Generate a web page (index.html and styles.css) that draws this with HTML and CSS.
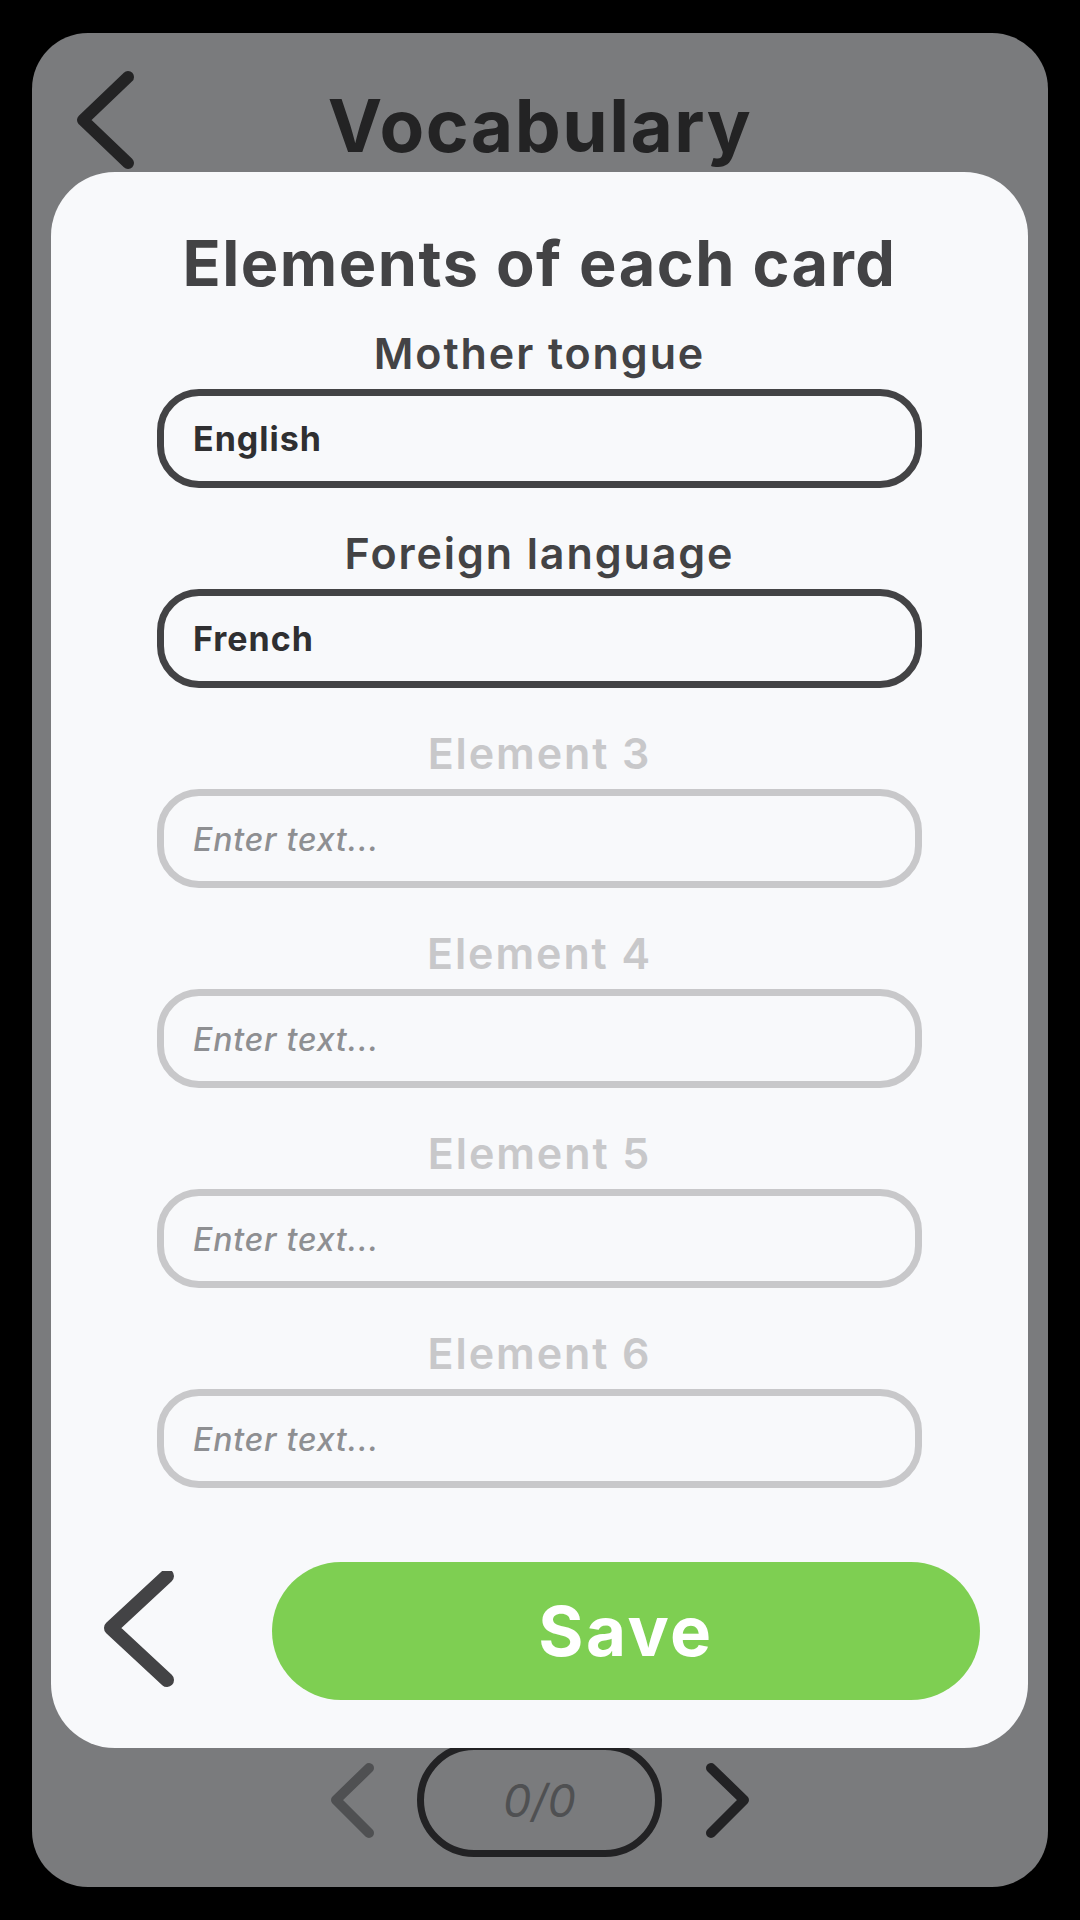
FILE: index.html
```html
<!DOCTYPE html>
<html lang="en">
<head>
<meta charset="utf-8">
<title>Vocabulary</title>
<link rel="stylesheet" href="styles.css">
</head>
<body>
<div class="phone">
  <header class="topbar">
    <svg class="top-back" width="70" height="110" viewBox="0 0 70 110"><path d="M62 6 L17 49 L62 92" /></svg>
    <h1 class="screen-title">Vocabulary</h1>
    <span class="topbar-spacer"></span>
  </header>
  <div class="screen-body"></div>
  <nav class="pager">
    <svg class="pager-arrow prev" width="50" height="80" viewBox="0 0 50 80"><path d="M43 8 L10 40 L43 73" /></svg>
    <div class="pager-count">0/0</div>
    <svg class="pager-arrow next" width="50" height="80" viewBox="0 0 50 80"><path d="M7 8 L40 40 L7 73" /></svg>
  </nav>

  <section class="modal">
    <h2 class="modal-title">Elements of each card</h2>
    <div class="fields">
      <div class="field">
        <label class="field-label">Mother tongue</label>
        <input class="field-input" type="text" value="English">
      </div>
      <div class="field">
        <label class="field-label">Foreign language</label>
        <input class="field-input" type="text" value="French">
      </div>
      <div class="field off">
        <label class="field-label">Element 3</label>
        <input class="field-input" type="text" placeholder="Enter text...">
      </div>
      <div class="field off">
        <label class="field-label">Element 4</label>
        <input class="field-input" type="text" placeholder="Enter text...">
      </div>
      <div class="field off">
        <label class="field-label">Element 5</label>
        <input class="field-input" type="text" placeholder="Enter text...">
      </div>
      <div class="field off">
        <label class="field-label">Element 6</label>
        <input class="field-input" type="text" placeholder="Enter text...">
      </div>
    </div>
    <div class="actions">
      <svg class="modal-back" width="90" height="120" viewBox="0 0 90 120"><path d="M72 5 L16 57 L72 109" /></svg>
      <button class="save-btn">Save</button>
    </div>
  </section>
</div>
</body>
</html>
```

FILE: styles.css
```css
* { box-sizing: border-box; }

html, body {
  margin: 0;
  padding: 0;
  background: #000;
}

body {
  width: 1080px;
  height: 1920px;
  padding: 33px 32px;
  font-family: "Inter", "Noto Sans", sans-serif;
}

.phone {
  position: relative;
  width: 1016px;
  height: 1854px;
  background: #7a7b7d;
  border-radius: 56px;
  display: flex;
  flex-direction: column;
}

.topbar {
  display: grid;
  grid-template-columns: 1fr auto 1fr;
  align-items: center;
  padding: 38px 34px 0 34px;
}

.top-back path,
.modal-back path,
.pager-arrow path {
  fill: none;
  stroke-linecap: round;
  stroke-linejoin: round;
}

.top-back path { stroke: #232324; stroke-width: 12; }

.screen-title {
  margin: 0;
  font-size: 73px;
  line-height: 100px;
  font-weight: 700;
  letter-spacing: 1.5px;
  color: #232324;
  text-align: center;
}

.screen-body { flex: 1; }

.pager {
  display: flex;
  justify-content: center;
  align-items: center;
  margin-bottom: 30px;
}

.pager-arrow.prev { margin-right: 41px; }
.pager-arrow.next { margin-left: 42px; }
.pager-arrow.prev path { stroke: #4f5052; stroke-width: 10; }
.pager-arrow.next path { stroke: #222224; stroke-width: 10; }

.pager-count {
  width: 245px;
  height: 114px;
  border: 7px solid #222224;
  border-radius: 57px;
  display: flex;
  align-items: center;
  justify-content: center;
  font-size: 45px;
  font-style: italic;
  color: #4f5052;
}

.modal {
  position: absolute;
  left: 19px;
  right: 20px;
  top: 139px;
  bottom: 139px;
  background: #f8f9fb;
  border-radius: 64px;
  padding: 51px 0 48px 0;
  display: flex;
  flex-direction: column;
}

.modal-title {
  margin: 0;
  font-size: 63px;
  line-height: 80px;
  font-weight: 700;
  letter-spacing: 1.5px;
  color: #434345;
  text-align: center;
}

.fields {
  display: flex;
  flex-direction: column;
  align-items: center;
  gap: 39px;
  margin-top: 24px;
}

.field {
  width: 765px;
  display: flex;
  flex-direction: column;
  gap: 10px;
}

.field-label {
  font-size: 43px;
  line-height: 52px;
  font-weight: 600;
  letter-spacing: 1.9px;
  color: #434345;
  text-align: center;
}

.field-input {
  width: 100%;
  height: 99px;
  border: 7px solid #434345;
  border-radius: 42px;
  background: #f8f9fb;
  padding: 0 0 0 29px;
  font-family: "Inter", "Noto Sans", sans-serif;
  font-size: 34px;
  font-weight: 700;
  letter-spacing: 1px;
  color: #2f2f31;
  outline: none;
}

.field.off .field-label { color: #c8c8ca; }
.field.off .field-input { border-color: #c8c8ca; }

.field-input::placeholder {
  font-style: italic;
  font-weight: 500;
  font-size: 32px;
  letter-spacing: 0.8px;
  color: #8e8f92;
  opacity: 1;
}

.actions {
  margin-top: auto;
  display: flex;
  align-items: center;
  padding: 0 48px 0 44px;
}

.modal-back { margin-right: 87px; flex: none; }
.modal-back path { stroke: #434345; stroke-width: 14; }

.save-btn {
  flex: 1;
  height: 138px;
  border: none;
  border-radius: 69px;
  background: #7ecf52;
  color: #fff;
  font-family: "Inter", "Noto Sans", sans-serif;
  font-size: 69px;
  font-weight: 700;
  letter-spacing: 2.5px;
  padding: 0;
}
```
